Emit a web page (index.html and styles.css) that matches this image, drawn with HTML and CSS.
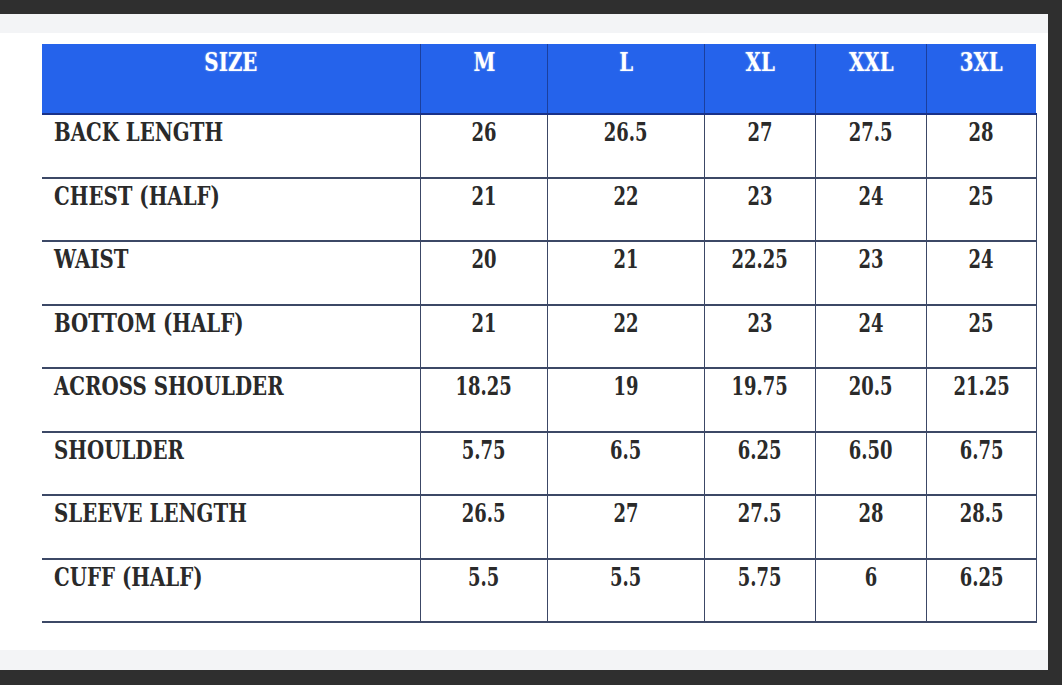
FILE: index.html
```html
<!DOCTYPE html>
<html>
<head>
<meta charset="utf-8">
<link rel="stylesheet" href="styles.css">
</head>
<body>
<div class="panel">
  <div class="sheet">
    <table class="chart">
      <thead>
        <tr><th class="label"><span class="t">SIZE</span></th><th><span class="t">M</span></th><th><span class="t">L</span></th><th><span class="t">XL</span></th><th><span class="t">XXL</span></th><th><span class="t">3XL</span></th></tr>
      </thead>
      <tbody>
        <tr><td class="label"><span class="t">BACK LENGTH</span></td><td><span class="t">26</span></td><td><span class="t">26.5</span></td><td><span class="t">27</span></td><td><span class="t">27.5</span></td><td><span class="t">28</span></td></tr>
        <tr><td class="label"><span class="t">CHEST (HALF)</span></td><td><span class="t">21</span></td><td><span class="t">22</span></td><td><span class="t">23</span></td><td><span class="t">24</span></td><td><span class="t">25</span></td></tr>
        <tr><td class="label"><span class="t">WAIST</span></td><td><span class="t">20</span></td><td><span class="t">21</span></td><td><span class="t">22.25</span></td><td><span class="t">23</span></td><td><span class="t">24</span></td></tr>
        <tr><td class="label"><span class="t">BOTTOM (HALF)</span></td><td><span class="t">21</span></td><td><span class="t">22</span></td><td><span class="t">23</span></td><td><span class="t">24</span></td><td><span class="t">25</span></td></tr>
        <tr><td class="label"><span class="t">ACROSS SHOULDER</span></td><td><span class="t">18.25</span></td><td><span class="t">19</span></td><td><span class="t">19.75</span></td><td><span class="t">20.5</span></td><td><span class="t">21.25</span></td></tr>
        <tr><td class="label"><span class="t">SHOULDER</span></td><td><span class="t">5.75</span></td><td><span class="t">6.5</span></td><td><span class="t">6.25</span></td><td><span class="t">6.50</span></td><td><span class="t">6.75</span></td></tr>
        <tr><td class="label"><span class="t">SLEEVE LENGTH</span></td><td><span class="t">26.5</span></td><td><span class="t">27</span></td><td><span class="t">27.5</span></td><td><span class="t">28</span></td><td><span class="t">28.5</span></td></tr>
        <tr><td class="label"><span class="t">CUFF (HALF)</span></td><td><span class="t">5.5</span></td><td><span class="t">5.5</span></td><td><span class="t">5.75</span></td><td><span class="t">6</span></td><td><span class="t">6.25</span></td></tr>
      </tbody>
    </table>
  </div>
</div>
</body>
</html>
```

FILE: styles.css
```css
html, body {
  margin: 0;
  padding: 0;
  background: #2f2f2f;
  width: 1062px;
  height: 685px;
  overflow: hidden;
}
.panel {
  margin-top: 14px;
  width: 1048px;
  height: 656px;
  background: #f3f4f6;
  padding: 19px 0 20px;
  box-sizing: border-box;
}
.sheet {
  background: #ffffff;
  height: 617px;
  padding: 11px 0 0 42px;
  box-sizing: border-box;
}
.chart {
  border-collapse: collapse;
  table-layout: fixed;
  font-family: "DejaVu Serif", serif;
  font-weight: bold;
  color: #262626;
}
.t {
  display: inline-block;
  transform: scaleX(0.76);
  transform-origin: center top;
  white-space: nowrap;
}
.chart th {
  background: #2563eb;
  color: #ffffff;
  height: 66px;
  font-size: 26px;
  line-height: 30px;
  vertical-align: top;
  padding: 3px 0 0;
  text-align: center;
  border-left: 1px solid #1b3f9e;
  border-bottom: 2px solid #1a3288;
  text-shadow: 0 0 2px rgba(255,255,255,0.55);
}
.chart th.label {
  border-left: none;
}
.chart th:nth-child(1) { width: 378px; }
.chart th:nth-child(2) { width: 126px; }
.chart th:nth-child(3) { width: 156px; }
.chart th:nth-child(4) { width: 110px; }
.chart th:nth-child(5) { width: 110px; }
.chart th:nth-child(6) { width: 109px; }
.chart td {
  height: 59.5px;
  font-size: 26px;
  line-height: 30px;
  vertical-align: top;
  padding: 2px 0 0;
  text-align: center;
  border-left: 1px solid #3c4866;
  border-right: 1px solid #3c4866;
  border-bottom: 2px solid #3c4866;
  color: #2a2a2a;
}
.chart td .t {
  transform: scaleX(0.69);
}
.chart td.label {
  border-left: none;
  text-align: left;
  padding-left: 12px;
}
.chart td.label .t {
  transform: scaleX(0.76);
  transform-origin: left top;
}
```
